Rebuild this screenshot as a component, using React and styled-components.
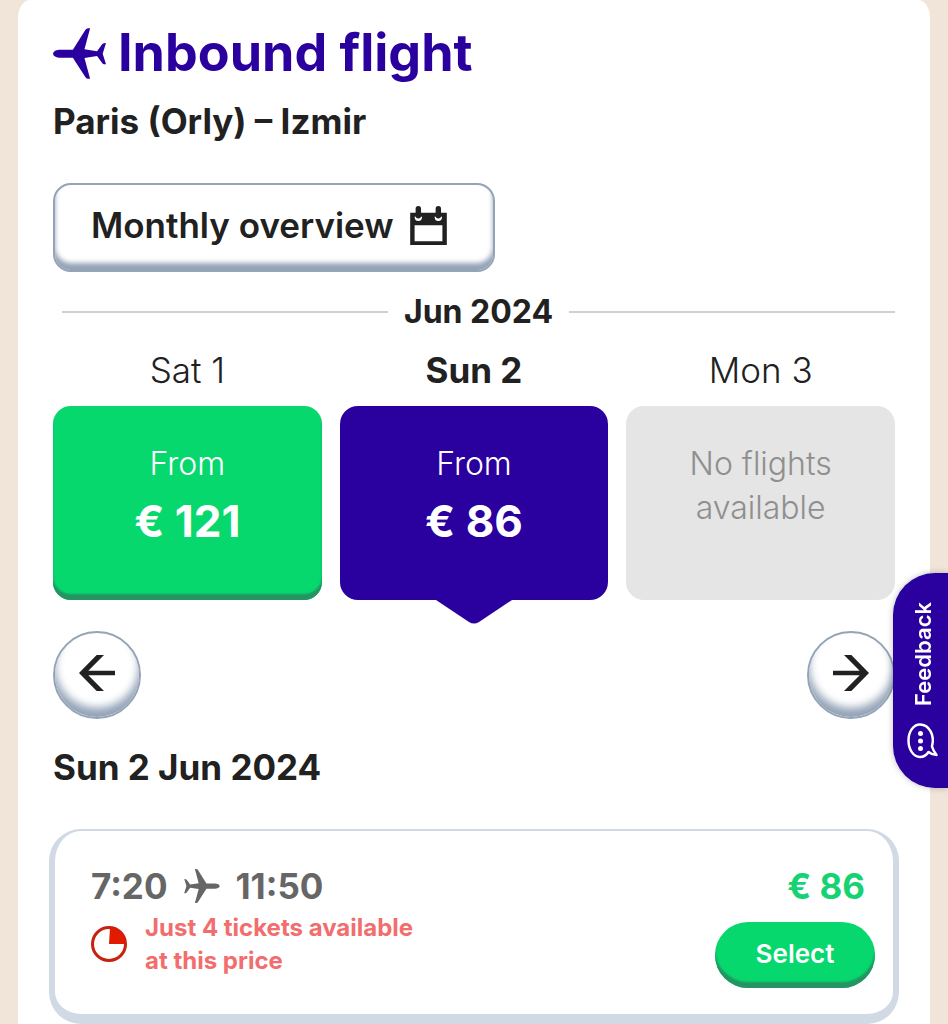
import React from "react";
import styled, { createGlobalStyle, css } from "styled-components";

const GlobalStyle = createGlobalStyle`
  * {
    box-sizing: border-box;
  }

  body {
    margin: 0;
    background-color: #f0e5d8;
    color: #212121;
    font-family: Inter, "Open Sans", sans-serif;
  }

  button {
    font-family: inherit;
    border: 0;
    cursor: pointer;
  }
`;

const Page = styled.div`
  min-height: 100vh;
  padding: 0 18px;
`;

const Panel = styled.main`
  min-height: 100vh;
  padding: 18px 35px 0;
  background-color: #fff;
  border-radius: 12px 12px 0 0 / 18px 18px 0 0;
`;

const Title = styled.h1`
  display: flex;
  align-items: center;
  gap: 12px;
  margin: 0;
  color: #2a009f;
  font-size: 52px;
  font-weight: 700;
  line-height: 70px;
`;

const TitlePlane = styled.svg`
  width: 53px;
  height: 51px;
  flex-shrink: 0;
`;

const Route = styled.p`
  margin: 10px 0 0;
  font-size: 35px;
  font-weight: 700;
  line-height: 46px;
`;

const raised = css`
  background-color: #fff;
  color: #212121;
  border: 2px solid #94a3b5;
`;

const OverviewButton = styled.button`
  ${raised}
  display: flex;
  align-items: center;
  gap: 16px;
  height: 89px;
  margin-top: 39px;
  padding: 0 46px 5px 36px;
  border-radius: 18px;
  box-shadow: inset 0 -7px 5px #94a3b8;
  font-size: 35px;
  font-weight: 600;
`;

const CalendarSvg = styled.svg`
  width: 37px;
  height: 39px;
`;

const Month = styled.h2`
  display: flex;
  align-items: center;
  gap: 16px;
  margin: 20px 0 0;
  padding-left: 9px;
  font-size: 32px;
  font-weight: 700;
  line-height: 40px;

  &::before,
  &::after {
    content: "";
    flex: 1;
    height: 2px;
    background-color: #d0d0d0;
  }
`;

const Days = styled.div`
  display: grid;
  grid-template-columns: repeat(3, 1fr);
  gap: 18px;
  margin-top: 16px;
`;

const Day = styled.div`
  display: flex;
  flex-direction: column;
  gap: 14px;
`;

const DayName = styled.div`
  font-size: 35px;
  font-weight: ${props => (props.$selected ? 700 : 300)};
  line-height: 44px;
  text-align: center;
`;

const tileStyles = {
  available: css`
    background-color: #06d86e;
    color: #fff;
    box-shadow: inset 0 -6px 2px #249462;
  `,
  selected: css`
    background-color: #2a009f;
    color: #fff;
  `,
  empty: css`
    background-color: #e5e5e5;
    color: #8f8f8f;
  `
};

const Tile = styled.button`
  position: relative;
  display: flex;
  flex-direction: column;
  align-items: center;
  height: 194px;
  padding: 36px 40px 0;
  border-radius: 18px;
  font-size: 32px;
  font-weight: 300;
  line-height: 44px;
  ${props => tileStyles[props.$kind]}
`;

const TilePrice = styled.strong`
  font-size: 44px;
  font-weight: 700;
  line-height: 70px;
`;

const TilePointer = styled.svg`
  position: absolute;
  top: 100%;
  left: 50%;
  width: 76px;
  height: 25px;
  margin: -1px 0 0 -38px;
`;

const Pager = styled.div`
  display: flex;
  justify-content: space-between;
  margin-top: 31px;
`;

const RoundButton = styled.button`
  ${raised}
  display: flex;
  align-items: center;
  justify-content: center;
  width: 88px;
  height: 88px;
  padding: 0 0 4px;
  border-radius: 50%;
  box-shadow: inset 0 -9px 9px #94a3b8;
`;

const ArrowSvg = styled.svg`
  width: 36px;
  height: 36px;
`;

const DateTitle = styled.h2`
  margin: 25px 0 0;
  font-size: 35px;
  font-weight: 700;
  line-height: 46px;
`;

const FlightCard = styled.section`
  display: flex;
  justify-content: space-between;
  margin: 39px -4px 0;
  padding: 32px 18px 26px 36px;
  border: solid #d0d9e4;
  border-width: 2px 6px 10px;
  border-radius: 32px;
`;

const FlightInfo = styled.div`
  display: flex;
  flex-direction: column;
  gap: 2px;
`;

const Times = styled.div`
  display: flex;
  align-items: center;
  gap: 16px;
  color: #666;
  font-size: 35px;
  font-weight: 700;
  line-height: 46px;
`;

const TimesPlane = styled.svg`
  width: 36px;
  height: 34px;
`;

const Notice = styled.div`
  display: flex;
  align-items: center;
  gap: 18px;
  color: #f26d6d;
  font-size: 24px;
  font-weight: 700;
  line-height: 33px;
`;

const NoticeText = styled.p`
  max-width: 290px;
  margin: 0;
`;

const ClockSvg = styled.svg`
  width: 36px;
  height: 36px;
`;

const Booking = styled.div`
  display: flex;
  flex-direction: column;
  align-items: flex-end;
  gap: 13px;
`;

const FlightPrice = styled.strong`
  padding-right: 10px;
  color: #15d272;
  font-size: 35px;
  font-weight: 700;
  line-height: 46px;
`;

const SelectButton = styled.button`
  width: 160px;
  height: 66px;
  padding: 0 0 4px;
  background-color: #06d86e;
  color: #fff;
  border-radius: 33px;
  box-shadow: inset 0 -6px 2px #249462;
  font-size: 26px;
  font-weight: 600;
`;

const FeedbackButton = styled.button`
  position: fixed;
  top: 573px;
  right: 0;
  display: flex;
  flex-direction: column;
  align-items: center;
  justify-content: center;
  gap: 18px;
  width: 55px;
  height: 215px;
  padding: 0 0 0 4px;
  background-color: #2a009f;
  color: #fff;
  border-radius: 42px 0 0 42px;
  box-shadow: 0 0 6px rgba(0, 0, 0, 0.25);
  font-size: 22px;
  font-weight: 600;
`;

const FeedbackLabel = styled.span`
  writing-mode: vertical-rl;
  transform: rotate(180deg);
`;

const BubbleSvg = styled.svg`
  width: 31px;
  height: 36px;
`;

const planePath =
  "M0 77C2 68 12 65 22 65H60L98 5Q101 0 106 0H112L95 64L133 70L149 48Q152 45 160 45L150 77L160 109H154Q151 109 149 106L133 84L95 90L112 153H106Q101 153 98 148L60 89H22C12 89 2 86 0 77Z";

const Arrow = ({ right }) => (
  <ArrowSvg viewBox="0 0 108 108" aria-hidden="true">
    <path
      d="M0 54L53 0H75L28 47H108V61H28L75 108H53Z"
      transform={right ? "translate(108 0) scale(-1 1)" : undefined}
      fill="currentColor"
    />
  </ArrowSvg>
);

const Calendar = () => (
  <CalendarSvg viewBox="0 0 108 115" aria-hidden="true">
    <path d="M0 20H108V115H0ZM13 57V104H95V57Z" fill="currentColor" fillRule="evenodd" />
    <path d="M15 32C15 46 33 46 33 32M74 32C74 46 92 46 92 32" fill="#fff" stroke="#fff" strokeWidth="4" />
    <path d="M24 8V29M83 8V29" stroke="currentColor" strokeWidth="16" strokeLinecap="round" />
  </CalendarSvg>
);

const days = [
  { name: "Sat 1", kind: "available", price: "€ 121" },
  { name: "Sun 2", kind: "selected", price: "€ 86" },
  { name: "Mon 3", kind: "empty" }
];

class App extends React.Component {
  renderDay = ({ name, kind, price }) => {
    const selected = kind === "selected";
    return (
      <Day key={name}>
        <DayName $selected={selected}>{name}</DayName>
        <Tile type="button" $kind={kind} disabled={!price}>
          {price ? (
            <>
              <span>From</span>
              <TilePrice>{price}</TilePrice>
            </>
          ) : (
            <span>No flights available</span>
          )}
          {selected && (
            <TilePointer viewBox="0 0 76 25" aria-hidden="true">
              <path d="M0 0H76V1L43 23Q38 26 33 23L0 1Z" fill="#2a009f" />
            </TilePointer>
          )}
        </Tile>
      </Day>
    );
  };

  render() {
    return (
      <>
        <GlobalStyle />
        <Page>
          <Panel>
            <Title>
              <TitlePlane viewBox="0 0 160 153" aria-hidden="true">
                <path d={planePath} fill="currentColor" />
              </TitlePlane>
              Inbound flight
            </Title>
            <Route>Paris (Orly) – Izmir</Route>
            <OverviewButton type="button">
              Monthly overview
              <Calendar />
            </OverviewButton>

            <Month>Jun 2024</Month>
            <Days>{days.map(this.renderDay)}</Days>
            <Pager>
              <RoundButton type="button" aria-label="Previous days">
                <Arrow />
              </RoundButton>
              <RoundButton type="button" aria-label="Next days">
                <Arrow right />
              </RoundButton>
            </Pager>

            <DateTitle>Sun 2 Jun 2024</DateTitle>
            <FlightCard>
              <FlightInfo>
                <Times>
                  7:20
                  <TimesPlane viewBox="0 0 160 153" aria-hidden="true">
                    <path d={planePath} transform="translate(160 0) scale(-1 1)" fill="currentColor" />
                  </TimesPlane>
                  11:50
                </Times>
                <Notice>
                  <ClockSvg viewBox="0 0 36 36" aria-hidden="true">
                    <circle cx="18" cy="18" r="16.5" fill="none" stroke="#c8210f" strokeWidth="3" />
                    <path d="M19 1.500A16.500 16.500 0 0 1 34.500 18H18Z" fill="#e01b00" />
                  </ClockSvg>
                  <NoticeText>Just 4 tickets available at this price</NoticeText>
                </Notice>
              </FlightInfo>
              <Booking>
                <FlightPrice>€ 86</FlightPrice>
                <SelectButton type="button">Select</SelectButton>
              </Booking>
            </FlightCard>
          </Panel>
        </Page>
        <FeedbackButton type="button">
          <FeedbackLabel>Feedback</FeedbackLabel>
          <BubbleSvg viewBox="0 0 31 36" aria-hidden="true">
            <path
              d="M13 1.500C6.500 1.500 1.500 8.500 1.500 17.500S6.500 34 13 34C17 34 19.500 32 21.500 29C24 31 26.500 32 29.500 32C27.500 29.500 26 27 25 23.500C28 12 22 1.500 13 1.500Z"
              fill="none"
              stroke="currentColor"
              strokeWidth="2.500"
              strokeLinejoin="round"
            />
            <g fill="currentColor">
              <circle cx="13.500" cy="10.500" r="2.500" />
              <circle cx="13.500" cy="18" r="2.500" />
              <circle cx="13.500" cy="25.500" r="2.500" />
            </g>
          </BubbleSvg>
        </FeedbackButton>
      </>
    );
  }
}

export default App;
